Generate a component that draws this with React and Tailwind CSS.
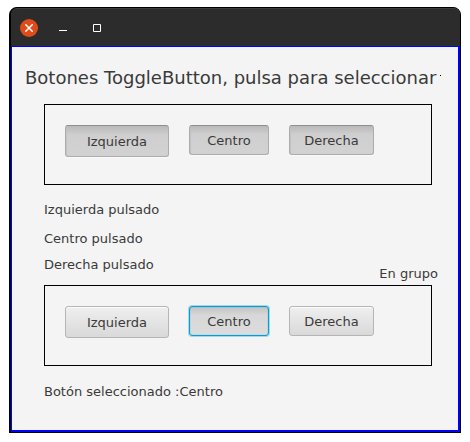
import { useState } from "react";

const options = [
  { name: "Izquierda", size: "h-8 w-[104px]" },
  { name: "Centro", size: "h-[30px] w-20" },
  { name: "Derecha", size: "h-[30px] w-[85px]" },
];

const base =
  "flex items-center justify-center rounded-[3px] border pt-[2px] text-[13px] leading-4 outline-none";
const raised =
  "border-[#b5b5b5] bg-linear-to-b from-[#efefef] to-[#d9d9d9] shadow-[inset_0_1px_0_#fcfcfc]";
const pressed =
  "border-[#acacac] border-t-[#8f8f8f] bg-linear-to-b from-[#b9b9b9] via-[#cfcfcf] via-30% to-[#d2d2d2] shadow-[0_1px_0_#fafafa,inset_1px_0_1px_#c3c3c3]";
const focused =
  "border-[#039ed3] bg-linear-to-b from-[#c2c2c2] via-[#d8d8d8] via-30% to-[#dcdcdc] shadow-[0_0_0_1px_#a5d8ea,inset_0_0_1px_#039ed3]";

function ToggleButton({ option, look, selected, onClick }) {
  return (
    <button
      type="button"
      aria-pressed={selected}
      onClick={onClick}
      className={`${base} ${option.size} ${look}`}
    >
      {option.name}
    </button>
  );
}

function TitleBar() {
  return (
    <header className="flex h-[38px] items-center gap-5 rounded-t-md border-t border-[#3d3d3d] bg-[#2c2c2c] pl-[9px] text-white">
      <button
        type="button"
        aria-label="Cerrar"
        className="flex size-[18px] items-center justify-center rounded-full bg-[#e04b1a]"
      >
        <svg viewBox="0 0 8 8" className="size-2" stroke="currentColor" strokeWidth="1.5">
          <path d="M.3.3l7.4 7.4M7.7.3l-7.4 7.4" />
        </svg>
      </button>
      <button type="button" aria-label="Minimizar" className="flex h-4 w-[10px] items-center justify-center">
        <svg viewBox="0 0 8 8" className="size-2" fill="currentColor">
          <path d="M0 6h8v1H0z" />
        </svg>
      </button>
      <button type="button" aria-label="Maximizar" className="ml-1 flex size-[10px] items-center justify-center">
        <svg viewBox="0 0 8 8" className="size-2" fill="none" stroke="currentColor">
          <path d="M.5.5h7v7h-7z" />
        </svg>
      </button>
    </header>
  );
}

export default function App() {
  const [active, setActive] = useState({ Izquierda: true, Centro: true, Derecha: true });
  const [choice, setChoice] = useState("Centro");

  return (
    <div className="bg-white px-[9px] pt-[7px] pb-[9px] font-['DejaVu_Sans',sans-serif] text-[#3a3a3a]">
      <div className="rounded-t-lg border border-l-2 border-black bg-black">
        <TitleBar />
        <main className="flex flex-col border border-r-2 border-b-2 border-[#0000ff] bg-[#f4f4f4] pt-5 pr-[26px] pb-[30px] pl-8 text-[13px] leading-4">
          <h1 className="-mr-[9px] -ml-[19px] flex overflow-hidden text-lg leading-[21px] whitespace-nowrap">
            Botones ToggleButton, pulsa para seleccionar
            <span aria-hidden="true" className="mt-2 ml-auto size-px bg-black" />
          </h1>
          <section className="mt-4 flex h-[81px] items-start gap-5 border border-black p-5">
            {options.map((option) => (
              <ToggleButton
                key={option.name}
                option={option}
                selected={active[option.name]}
                look={active[option.name] ? pressed : raised}
                onClick={() => setActive({ ...active, [option.name]: !active[option.name] })}
              />
            ))}
          </section>
          <p className="mt-[17px]">Izquierda {active.Izquierda ? "pulsado" : "no pulsado"}</p>
          <p className="mt-[13px]">Centro {active.Centro ? "pulsado" : "no pulsado"}</p>
          <p className="mt-[10px]">Derecha {active.Derecha ? "pulsado" : "no pulsado"}</p>
          <p className="-mt-[7px] -mr-[6px] self-end">En grupo</p>
          <section className="mt-[3px] flex h-[81px] items-start gap-5 border border-black p-5">
            {options.map((option) => (
              <ToggleButton
                key={option.name}
                option={option}
                selected={choice === option.name}
                look={choice === option.name ? focused : raised}
                onClick={() => setChoice(option.name)}
              />
            ))}
          </section>
          <p className="mt-[18px]">Botón seleccionado :{choice}</p>
        </main>
      </div>
    </div>
  );
}
